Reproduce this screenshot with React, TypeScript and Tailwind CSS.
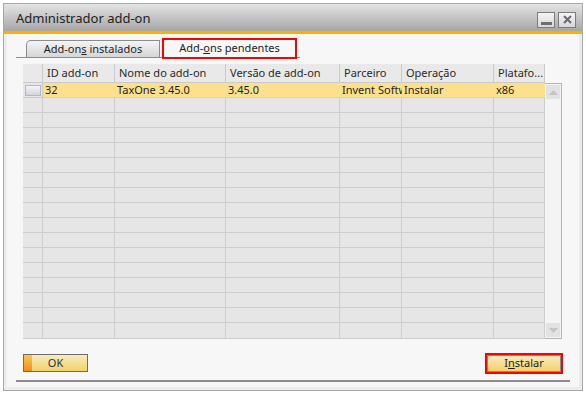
import React from "react";

const cols = [
  { w: "w-[20px]", label: "" },
  { w: "w-[72px]", label: "ID add-on" },
  { w: "w-[111px]", label: "Nome do add-on" },
  { w: "w-[114px]", label: "Versão de add-on" },
  { w: "w-[62px]", label: "Parceiro" },
  { w: "w-[92px]", label: "Operação" },
  { w: "w-[51px]", label: "Platafo..." },
];

const firstRow = ["32", "TaxOne 3.45.0", "3.45.0", "Invent Softw", "Instalar", "x86"];

export default function App() {
  const empty = Array.from({ length: 16 });
  return (
    <div
      className="w-[586px] h-[393px] bg-white pt-[3px] pl-[3px] text-[11px] text-[#1e1e1e]"
      style={{ fontFamily: '"Noto Sans", "Open Sans", sans-serif' }}
    >
      <div className="w-[580px] h-[388px] border border-[#a8a8a8] flex flex-col bg-[#f7f7f7]">
        {/* title bar */}
        <div className="h-[27px] shrink-0 flex items-center justify-between pl-[12px] pr-[6px] bg-gradient-to-b from-[#e4e4e4] to-[#a6a6a6]">
          <span className="text-[13px] text-[#222] mt-[2px]">Administrador add-on</span>
          <div className="flex gap-[3px] mt-[4px]">
            <div className="w-[18px] h-[16px] border border-[#7c7c7c] bg-gradient-to-b from-[#f4f4f4] to-[#d8d8d8] flex items-end justify-center pb-[2px]">
              <div className="w-[11px] h-[3px] bg-[#6e6e6e]" />
            </div>
            <div className="w-[18px] h-[16px] border border-[#7c7c7c] bg-gradient-to-b from-[#f4f4f4] to-[#d8d8d8] flex items-center justify-center">
              <svg width="9" height="9" viewBox="0 0 9 9">
                <path d="M1 1 L8 8 M8 1 L1 8" stroke="#6a6a6a" strokeWidth="2" />
              </svg>
            </div>
          </div>
        </div>
        <div className="h-[3px] shrink-0 bg-[#f5b400]" />

        {/* body */}
        <div className="flex-1 flex flex-col border-x-[3px] border-b-[3px] border-[#ececec] pl-[9px] pr-[6px]">
          {/* tabs */}
          <div className="mt-[3px] w-[284px] h-[21px] border-b border-[#8c8c8c] flex items-end pl-[10px] gap-[2px]">
            <div className="w-[134px] h-[17px] rounded-tl-[5px] border border-b-0 border-[#8c8c8c] bg-gradient-to-b from-[#f4f4f4] to-[#d6d6d6] flex items-center justify-center">
              <span>
                Add-on<span className="underline">s</span> instalados
              </span>
            </div>
            <div className="w-[135px] h-[21px] border-2 border-[#ff0000] bg-[#f7f7f7] -mb-[2px] flex items-center justify-center">
              <span>
                Add-<span className="underline">o</span>ns pendentes
              </span>
            </div>
          </div>

          {/* grid */}
          <div className="mt-[6px] ml-[7px] flex">
            <div className="w-[522px] bg-[#e6e6e6] border-b border-[#cdcdcd]">
              <div className="flex h-[19px] bg-[#e9e9e9]">
                {cols.map((c, i) => (
                  <div
                    key={i}
                    className={`${c.w} h-full border-r border-b border-[#cacaca] flex items-center pl-[4px] text-[#2a2a2a] truncate`}
                  >
                    {c.label}
                  </div>
                ))}
              </div>
              <div className="flex h-[15px]">
                <div className="w-[20px] h-full border-r border-b border-[#cacaca] flex items-center justify-center">
                  <div className="w-[16px] h-[11px] border border-[#b4b8c0] bg-gradient-to-b from-[#f2f4f7] to-[#d2d6dc]" />
                </div>
                {firstRow.map((v, i) => (
                  <div
                    key={i}
                    className={`${cols[i + 1].w} h-full bg-[#fde08d] border-b border-[#e7d29a] flex items-center pl-[2px] overflow-hidden whitespace-nowrap`}
                  >
                    {v}
                  </div>
                ))}
              </div>
              {empty.map((_, r) => (
                <div key={r} className="flex h-[15px]">
                  {cols.map((c, i) => (
                    <div key={i} className={`${c.w} h-full border-r border-b border-[#cdcdcd] ${r === 15 ? "border-b-0" : ""}`} />
                  ))}
                </div>
              ))}
            </div>
            {/* scrollbar */}
            <div className="mt-[19px] w-[17px] border border-l-0 border-[#b4b4b4] bg-[#f4f4f4] flex flex-col justify-between p-[1px]">
              <div className="h-[14px] bg-[#e2e2e2] flex items-center justify-center">
                <svg width="9" height="5" viewBox="0 0 9 5">
                  <path d="M0 5 L4.5 0 L9 5 Z" fill="#c4c4c4" />
                </svg>
              </div>
              <div className="h-[14px] bg-[#e2e2e2] flex items-center justify-center">
                <svg width="9" height="5" viewBox="0 0 9 5">
                  <path d="M0 0 L4.5 5 L9 0 Z" fill="#c4c4c4" />
                </svg>
              </div>
            </div>
          </div>

          {/* buttons */}
          <div className="mt-[15px] flex justify-between items-start pl-[7px] pr-[10px]">
            <div className="w-[65px] h-[18px] border border-[#6c6c6c] flex">
              <div className="w-[8px] h-full bg-gradient-to-b from-[#fbc84a] to-[#ef8e10]" />
              <div className="flex-1 h-full bg-gradient-to-b from-[#f8ebbe] to-[#f1d266] flex items-center justify-center pr-[8px] text-[#1a3450]">
                OK
              </div>
            </div>
            <div className="w-[78px] h-[21px] border-2 border-[#ff0000] -mt-[1px]">
              <div className="w-full h-full border border-[#8c8c8c] bg-gradient-to-b from-[#f8ebbe] to-[#f1d266] flex items-center justify-center">
                <span>
                  I<span className="underline">n</span>stalar
                </span>
              </div>
            </div>
          </div>
          <div className="mt-[6px] w-[554px] h-[2px] bg-[#8c8c8c]" />
        </div>
      </div>
    </div>
  );
}
